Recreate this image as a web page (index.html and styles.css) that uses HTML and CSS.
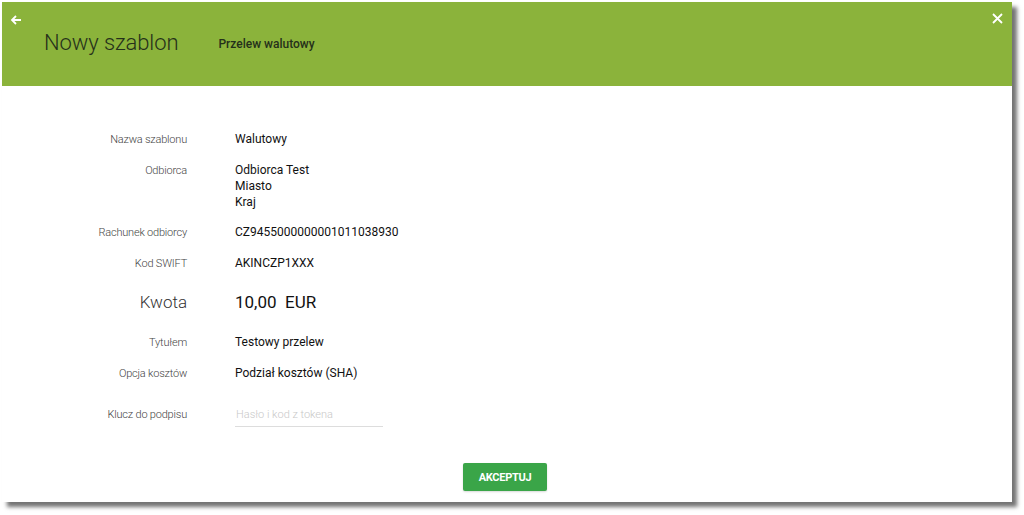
FILE: index.html
```html
<!DOCTYPE html>
<html lang="pl">
<head>
<meta charset="utf-8">
<title>Nowy szablon</title>
<link rel="stylesheet" href="styles.css">
</head>
<body>
<div class="panel">
  <header class="head">
    <button class="icon-btn back" aria-label="Wstecz">
      <svg width="12" height="12" viewBox="0 0 12 12"><path d="M11 6H2M6 2L2 6l4 4" fill="none" stroke="#fff" stroke-width="1.8"/></svg>
    </button>
    <h1 class="title">Nowy szablon</h1>
    <span class="subtitle">Przelew walutowy</span>
    <button class="icon-btn close" aria-label="Zamknij">
      <svg width="11" height="11" viewBox="0 0 11 11"><path d="M1 1l9 9M10 1l-9 9" fill="none" stroke="#fff" stroke-width="1.8"/></svg>
    </button>
  </header>
  <main class="content">
    <div class="form">
      <div class="label">Nazwa szablonu</div>
      <div class="value">Walutowy</div>

      <div class="label">Odbiorca</div>
      <div class="value">Odbiorca Test<br>Miasto<br>Kraj</div>

      <div class="label">Rachunek odbiorcy</div>
      <div class="value">CZ9455000000001011038930</div>

      <div class="label">Kod SWIFT</div>
      <div class="value">AKINCZP1XXX</div>

      <div class="label big sp-top">Kwota</div>
      <div class="value big sp-top">10,00&nbsp; EUR</div>

      <div class="label sp-top2">Tytułem</div>
      <div class="value sp-top2">Testowy przelew</div>

      <div class="label">Opcja kosztów</div>
      <div class="value">Podział kosztów (SHA)</div>

      <div class="label sp-top3">Klucz do podpisu</div>
      <div class="value sp-top3"><input class="field" type="password" placeholder="Hasło i kod z tokena"></div>
    </div>
    <div class="actions">
      <button class="accept">AKCEPTUJ</button>
    </div>
  </main>
</div>
</body>
</html>
```

FILE: styles.css
```css
* { box-sizing: border-box; }
html, body { margin: 0; padding: 0; background: #fff; }
body {
  font-family: Roboto, "Liberation Sans", sans-serif;
  padding: 2px 12px 13px 2px;
  height: 515px;
  overflow: hidden;
}
.panel {
  width: 1010px;
  height: 500px;
  background: #fff;
  box-shadow: 5px 5px 4px rgba(0,0,0,0.55);
  display: flex;
  flex-direction: column;
}
.head {
  position: relative;
  height: 84px;
  background: #8bb33b;
  display: flex;
  align-items: center;
  padding-left: 42px;
  padding-bottom: 3px;
}
.icon-btn {
  position: absolute;
  top: 12px;
  background: none;
  border: 0;
  padding: 0;
  line-height: 0;
  cursor: pointer;
}
.back { left: 8px; }
.close { right: 9px; top: 11px; }
.title {
  margin: 0;
  font-weight: 300;
  font-size: 22px;
  color: #25301a;
  letter-spacing: -0.1px;
}
.subtitle {
  margin-left: 40px;
  font-size: 12px;
  font-weight: 500;
  color: #25301a;
  padding-top: 3px;
}
.content {
  flex: 1;
  padding-top: 45px;
  display: flex;
  flex-direction: column;
}
.form {
  display: grid;
  grid-template-columns: 185px auto;
  column-gap: 48px;
  row-gap: 14px;
  align-items: baseline;
}
.label {
  text-align: right;
  font-size: 11px;
  font-weight: 300;
  color: #444;
  line-height: 16px;
  letter-spacing: -0.2px;
}
.value {
  font-size: 12px;
  color: #111;
  line-height: 16px;
  font-weight: 400;
  letter-spacing: 0;
}
.label.big {
  font-size: 17px;
  font-weight: 300;
  color: #333;
  line-height: 24px;
  letter-spacing: 0;
}
.value.big {
  font-size: 17px;
  font-weight: 400;
  color: #111;
  line-height: 24px;
  letter-spacing: 0;
}
.sp-top { margin-top: 4px; }
.sp-top2 { margin-top: 6px; }
.sp-top3 { margin-top: 10px; }
.field {
  width: 148px;
  border: 0;
  border-bottom: 1px solid #ddd;
  font-family: inherit;
  font-size: 11px;
  font-weight: 300;
  padding: 0 0 5px 1px;
  outline: none;
  color: #333;
  background: transparent;
}
.field::placeholder { color: #c8c8c8; }
.actions {
  display: flex;
  justify-content: center;
  padding-top: 36px;
  padding-right: 4px;
}
.accept {
  width: 84px;
  height: 28px;
  background: #3aa548;
  color: #fff;
  border: 0;
  border-radius: 2px;
  font-family: inherit;
  font-size: 11px;
  font-weight: 700;
  letter-spacing: -0.3px;
  box-shadow: 0 1px 2px rgba(0,0,0,0.15);
}
```
